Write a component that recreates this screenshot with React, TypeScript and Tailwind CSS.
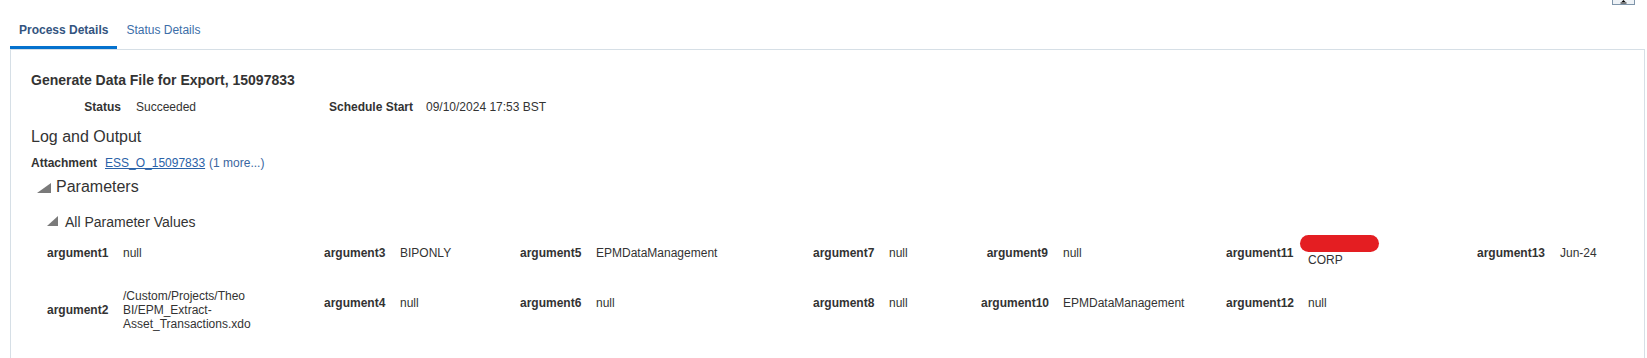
import React from "react";

type Cell = { label: string; value: React.ReactNode[] };
type Col = { w: number; r1: Cell; r2?: Cell };

const cols: Col[] = [
  { w: 277, r1: { label: "argument1", value: ["null"] }, r2: { label: "argument2", value: ["/Custom/Projects/Theo", "BI/EPM_Extract-", "Asset_Transactions.xdo"] } },
  { w: 196, r1: { label: "argument3", value: ["BIPONLY"] }, r2: { label: "argument4", value: ["null"] } },
  { w: 293, r1: { label: "argument5", value: ["EPMDataManagement"] }, r2: { label: "argument6", value: ["null"] } },
  { w: 168, r1: { label: "argument7", value: ["null"] }, r2: { label: "argument8", value: ["null"] } },
  { w: 245, r1: { label: "argument9", value: ["null"] }, r2: { label: "argument10", value: ["EPMDataManagement"] } },
  {
    w: 251,
    r1: {
      label: "argument11",
      value: [
        <span key="r" className="relative block h-[14px]">
          <span className="absolute left-[-8px] top-[-4px] w-[79px] h-[17px] rounded-full bg-[#e41e22]" />
        </span>,
        "CORP",
      ],
    },
    r2: { label: "argument12", value: ["null"] },
  },
  { w: 150, r1: { label: "argument13", value: ["Jun-24"] } },
];

const labelW = [61, 61, 61, 61, 67, 67, 68];

function Tri({ w, h }: { w: number; h: number }) {
  return (
    <svg width={w} height={h} viewBox={`0 0 ${w} ${h}`} className="block">
      <path d={`M${w} 0 L${w} ${h} L0 ${h} Z`} fill="#7a7a7a" />
    </svg>
  );
}

export default function App() {
  return (
    <div className="w-[1647px] h-[358px] overflow-hidden bg-white text-[#333333] font-['Liberation_Sans',Arial,sans-serif]">
      {/* top strip with partially visible button */}
      <div className="h-[5px] flex justify-end pr-[12px]">
        <div className="w-[23px] h-[5px] border-x border-b border-[#7f95aa] bg-[#eef2f6] flex justify-center items-end">
          <svg width="9" height="4" viewBox="0 0 9 4" className="block">
            <path d="M4.5 0 L6.5 2 L2.5 2 Z" fill="#000" />
            <rect x="1.5" y="2.5" width="6" height="1" fill="#000" />
          </svg>
        </div>
      </div>

      {/* tabs */}
      <div className="flex pl-[10px] h-[44px]">
        <div className="px-[9px] pt-[18px] pb-[9px] border-b-[3px] border-[#0572ce] text-[12px] leading-[14px] font-bold text-[#33547f]">
          Process Details
        </div>
        <div className="px-[9px] pt-[18px] pb-[9px] border-b-[3px] border-transparent text-[12px] leading-[14px] text-[#3b6ea8]">
          Status Details
        </div>
      </div>

      {/* panel */}
      <div className="ml-[10px] w-[1635px] border-t border-x border-[#d6dfe6] pl-[20px] pt-[22px] pb-[40px]">
        <div className="text-[14px] leading-[16px] font-bold">Generate Data File for Export, 15097833</div>

        <div className="mt-[12px] flex text-[12px] leading-[14px]">
          <div className="w-[298px] flex">
            <div className="w-[90px] text-right font-bold">Status</div>
            <div className="ml-[15px]">Succeeded</div>
          </div>
          <div className="flex">
            <div className="w-[82px] font-bold whitespace-nowrap">Schedule Start</div>
            <div className="ml-[15px]">09/10/2024 17:53 BST</div>
          </div>
        </div>

        <div className="mt-[14px] text-[16px] leading-[18px]">Log and Output</div>

        <div className="mt-[10px] flex text-[12px] leading-[14px]">
          <span className="font-bold">Attachment</span>
          <span className="ml-[8px] text-[#2a62a8] underline">ESS_O_15097833</span>
          <span className="ml-[4px] text-[#3a66a0]">(1 more...)</span>
        </div>

        <div className="mt-[8px] flex items-start text-[16px] leading-[18px]">
          <div className="ml-[6px] mt-[5px]">
            <Tri w={14} h={10} />
          </div>
          <div className="ml-[5px]">Parameters</div>
        </div>

        <div className="mt-[18px] flex items-start text-[14px] leading-[16px]">
          <div className="ml-[16px] mt-[2px]">
            <Tri w={11} h={10} />
          </div>
          <div className="ml-[7px]">All Parameter Values</div>
        </div>

        <div className="mt-[9px] ml-[16px] text-[12px] leading-[14px]">
          <div className="flex h-[28px]">
            {cols.map((c, i) => (
              <div key={i} className="flex items-center shrink-0" style={{ width: c.w }}>
                <div className="text-right font-bold shrink-0" style={{ width: labelW[i] }}>
                  {c.r1.label}
                </div>
                <div className="ml-[15px] flex flex-col">
                  {c.r1.value.map((v, j) => (
                    <div key={j}>{v}</div>
                  ))}
                </div>
              </div>
            ))}
          </div>
          <div className="flex mt-[22px]">
            {cols.map((c, i) => (
              <div
                key={i}
                className={i === 0 ? "flex items-center shrink-0" : "flex items-start pt-[7px] shrink-0"}
                style={{ width: c.w }}
              >
                {c.r2 && (
                  <>
                    <div className="text-right font-bold shrink-0" style={{ width: labelW[i] }}>
                      {c.r2.label}
                    </div>
                    <div className="ml-[15px] flex flex-col">
                      {c.r2.value.map((v, j) => (
                        <div key={j}>{v}</div>
                      ))}
                    </div>
                  </>
                )}
              </div>
            ))}
          </div>
        </div>
      </div>
    </div>
  );
}
